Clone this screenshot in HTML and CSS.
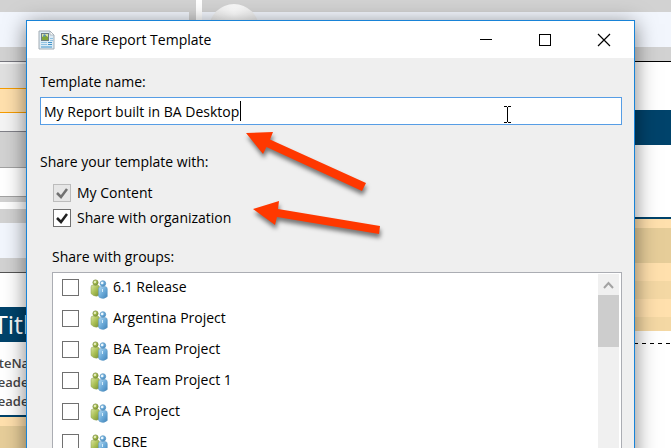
FILE: index.html
```html
<!DOCTYPE html>
<html lang="en">
<head>
    <meta charset="UTF-8">
    <meta name="viewport" content="width=device-width, initial-scale=1.0">
    <title>Share Report Template</title>
    <link rel="stylesheet" href="styles.css">
</head>
<body>
    <!-- Shared icon for the group list -->
    <svg class="defs" width="0" height="0">
        <defs>
            <linearGradient id="green" x1="0" y1="0" x2="1" y2="1">
                <stop offset="0" stop-color="#dbe6a0"/>
                <stop offset=".5" stop-color="#a9bf54"/>
                <stop offset="1" stop-color="#768d34"/>
            </linearGradient>
            <linearGradient id="blue" x1="0" y1="0" x2="1" y2="1">
                <stop offset="0" stop-color="#b4daf2"/>
                <stop offset=".5" stop-color="#6cabd9"/>
                <stop offset="1" stop-color="#3f82b8"/>
            </linearGradient>
            <symbol id="people" viewBox="0 0 18 21">
                <path d="M1 8Q1 6 3 6H7Q9.500 6 9.500 8.500V16Q7 18 3.500 16.500L1 14.500Z" fill="url(#green)" stroke="#8a9c50" stroke-width=".5"/>
                <circle cx="5.500" cy="3.500" r="2.600" fill="url(#green)" stroke="#71852f" stroke-width=".7"/>
                <circle cx="5" cy="3" r="1" fill="#f2f7d4"/>
                <path d="M8.500 10Q8.500 7.500 11 7.500H15Q17.300 7.500 17.300 10V17.500Q14 21 9.500 18.500L8.500 17Z" fill="url(#blue)" stroke="#5c96c2" stroke-width=".5"/>
                <circle cx="12.900" cy="4.500" r="2.800" fill="url(#blue)" stroke="#5290bf" stroke-width=".7"/>
                <circle cx="12.200" cy="4" r="1.300" fill="#eef8fe"/>
                <path d="M12.500 10V13" stroke="#d2ecfb" stroke-width="1"/>
            </symbol>
        </defs>
    </svg>

    <div class="desktop">
        <div class="backdrop">
            <div class="pane pane-left">
                <div class="band ribbon"></div>
                <div class="band gray h14"></div>
                <div class="band silver"></div>
                <div class="band selected"></div>
                <div class="band pale"></div>
                <div class="band gray h35"></div>
                <div class="band field"></div>
                <div class="band gray h5"></div>
                <div class="band white h7"></div>
                <div class="band gray h14"></div>
                <div class="band light h35"></div>
                <div class="band gray h14"></div>
                <div class="band page h35"></div>
                <div class="band heading">Title</div>
                <div class="band names">
                    <span>SiteName</span>
                    <span>Header</span>
                    <span>Header</span>
                </div>
                <div class="band sand h9"></div>
                <div class="band tan rest"></div>
            </div>
            <div class="pane pane-right">
                <span class="orb"></span>
                <div class="band ribbon"></div>
                <div class="band gray h14"></div>
                <div class="band page black h49"></div>
                <div class="band navy h35"></div>
                <div class="band white h72"></div>
                <div class="band navy h2"></div>
                <div class="band sand h9"></div>
                <div class="band tan h35"></div>
                <div class="band sand h18"></div>
                <div class="band wheat h18"></div>
                <div class="band sand h18"></div>
                <div class="band wheat h14"></div>
                <div class="band white h12"></div>
                <div class="band dashed"></div>
                <div class="band white rest"></div>
            </div>
        </div>

        <form class="dialog">
            <header class="titlebar">
                <svg class="app-icon" width="17" height="20" viewBox="0 0 17 20">
                    <path d="M1 1H12L16 5V19H1Z" fill="#dcebf5" stroke="#a3adb5"/>
                    <path d="M12 1V5H16Z" fill="#fff" stroke="#a3adb5" stroke-width=".8"/>
                    <rect x="3.500" y="3.500" width="7" height="7" fill="#d9e3a2" stroke="#6c7d83"/>
                    <path d="M4 7L7 5L10 7V10H4Z" fill="#7fa537"/>
                    <circle cx="6.500" cy="5.500" r="1.200" fill="#5792bd"/>
                    <path d="M3 12.500H9M3 14.500H9M12 8.500H15M12 10.500H15" stroke="#8fc2e3"/>
                    <path d="M10 12.500H14M10 14.500H14M3 17H14" stroke="#3f94cb"/>
                </svg>
                <h1>Share Report Template</h1>
                <div class="window-buttons">
                    <button type="button" aria-label="Minimize">
                        <svg width="14" height="14"><path d="M1 6.500H13" stroke="#000"/></svg>
                    </button>
                    <button type="button" aria-label="Maximize">
                        <svg width="14" height="14"><rect x="1.500" y="1.500" width="11" height="11" fill="none" stroke="#000"/></svg>
                    </button>
                    <button type="button" aria-label="Close">
                        <svg width="14" height="14"><path d="M1 1L13 13M13 1L1 13" stroke="#000" stroke-width="1.200"/></svg>
                    </button>
                </div>
            </header>

            <div class="content">
                <label class="caption" for="template-name">Template name:</label>
                <div class="name-box">
                    <input type="text" id="template-name" value="My Report built in BA Desktop">
                    <span class="caret"></span>
                    <svg class="pointer" width="9" height="17"><path d="M1 .5H4M5 .5H8M4.500 1V16M1 16.500H4M5 16.500H8" fill="none" stroke="#000"/></svg>
                </div>

                <fieldset class="share-with">
                    <legend class="caption">Share your template with:</legend>
                    <label class="option"><input type="checkbox" checked disabled>My Content</label>
                    <label class="option"><input type="checkbox" checked>Share with organization</label>
                </fieldset>

                <div class="groups">
                    <h2 class="caption" id="groups-label">Share with groups:</h2>
                    <div class="list">
                        <ul aria-labelledby="groups-label">
                            <li><label><input type="checkbox"><svg width="18" height="21"><use href="#people"/></svg>6.1 Release</label></li>
                            <li><label><input type="checkbox"><svg width="18" height="21"><use href="#people"/></svg>Argentina Project</label></li>
                            <li><label><input type="checkbox"><svg width="18" height="21"><use href="#people"/></svg>BA Team Project</label></li>
                            <li><label><input type="checkbox"><svg width="18" height="21"><use href="#people"/></svg>BA Team Project 1</label></li>
                            <li><label><input type="checkbox"><svg width="18" height="21"><use href="#people"/></svg>CA Project</label></li>
                            <li><label><input type="checkbox"><svg width="18" height="21"><use href="#people"/></svg>CBRE</label></li>
                        </ul>
                        <div class="scrollbar">
                            <button type="button" aria-label="Scroll up">
                                <svg width="11" height="8"><path d="M1 7L5.500 2L10 7" fill="none" stroke="#a3a3a3" stroke-width="2"/></svg>
                            </button>
                            <div class="thumb"></div>
                        </div>
                    </div>
                </div>
            </div>

            <!-- Callout arrows -->
            <svg class="arrows" width="150" height="120" viewBox="240 125 150 120">
                <path d="M246 133L273 132L270 139.500L366 183L362 191L266.500 147L263 154Z"/>
                <path d="M253 209L279 201L278 209L380 226L379 234L277 217L275 225Z"/>
            </svg>
        </form>
    </div>
</body>
</html>
```

FILE: styles.css
```css
* {
    box-sizing: border-box;
}
body {
    margin: 0;
    font-family: "Open Sans", "Noto Sans", sans-serif;
    font-size: 14px;
    line-height: 20px;
    color: #000;
}
.defs {
    position: absolute;
}
.desktop {
    position: relative;
    height: 100vh;
    overflow: hidden;
}

/* Report editor behind the dialog */
.backdrop {
    display: flex;
    gap: 6px;
    height: 100%;
    background: #fff;
}
.pane {
    display: flex;
    flex-direction: column;
    position: relative;
    padding-top: 12px;
    background: #d2d2d2;
    overflow: hidden;
}
.pane-left {
    width: 196px;
}
.pane-right {
    flex: 1;
}
.band {
    flex-shrink: 0;
}
.ribbon {
    height: 35px;
    background: #f2f6fd;
}
.pane-left .ribbon {
    margin-right: 7px;
}
.gray { background: #d2d2d2; }
.light { background: #f2f6fd; }
.white { background: #fff; }
.navy { background: #00436b; }
.sand { background: #ffe0ad; }
.tan { background: #e6cd99; }
.wheat { background: #f4d8a4; }
.h2 { height: 2px; }
.h5 { height: 5px; }
.h7 { height: 7px; }
.h9 { height: 9px; }
.h12 { height: 12px; }
.h14 { height: 14px; }
.h18 { height: 18px; }
.h35 { height: 35px; }
.h49 { height: 49px; }
.h72 { height: 72px; }
.rest { flex: 1; }
.silver {
    height: 27px;
    border-top: 1px solid #77777f;
    background: #e0e0e0;
    box-shadow: inset 0 2px #f6f6f6;
}
.selected {
    height: 25px;
    border: solid #f59c00;
    border-width: 1px 0;
    background: #ffe0ad;
}
.pale {
    height: 19px;
    border-bottom: 1px solid #808088;
    background: #f4f4f4;
}
.field {
    height: 30px;
    border: solid #a2a2a2;
    border-width: 1px 0;
    background: #fff;
}
.page {
    border-top: 1px solid #555;
    background: #fff;
}
.page.black {
    border-color: #000;
}
.heading {
    height: 35px;
    background: #00436b;
    color: #fff;
    font-size: 25px;
    line-height: 35px;
    text-indent: -6px;
}
.names {
    display: flex;
    flex-direction: column;
    height: 75px;
    padding-top: 12px;
    border-bottom: 2px solid #00436b;
    background: #fff;
    color: #444;
    font-size: 13px;
    font-weight: 600;
    line-height: 19px;
    text-indent: -12px;
}
.dashed {
    height: 1px;
    background: repeating-linear-gradient(to right, #000 0 4px, #fff 4px 8px);
}
.orb {
    position: absolute;
    top: 4px;
    left: 7px;
    width: 50px;
    height: 50px;
    border-radius: 50%;
    background: radial-gradient(circle at 50% 20%, #fff, #eee 45%, #ccc);
}

/* Dialog window */
.dialog {
    position: absolute;
    top: 20px;
    right: 36px;
    left: 26px;
    border: 1px solid #1883d7;
    background: #efefef;
    box-shadow: 0 4px 20px rgba(0, 0, 0, 0.5);
}
.titlebar {
    display: flex;
    align-items: center;
    height: 37px;
    padding: 0 1px 0 11px;
    background: #fff;
}
.titlebar h1 {
    flex: 1;
    margin: 0 0 0 6px;
    font-size: 14px;
    font-weight: 400;
}
.window-buttons {
    display: flex;
}
button {
    display: flex;
    align-items: center;
    justify-content: center;
    padding: 0;
    border: 0;
    background: none;
}
.window-buttons button {
    width: 59px;
    height: 36px;
}
.content {
    padding: 14px 12px 12px 13px;
}
.caption {
    display: block;
    margin: 0;
    padding: 0;
    font-size: 14px;
    font-weight: 400;
}
.name-box {
    position: relative;
    margin-top: 5px;
}
.name-box input {
    display: block;
    width: 100%;
    height: 28px;
    padding: 0 3px;
    border: 1px solid #569de5;
    background: #fff;
    font: inherit;
    outline: none;
}
.caret {
    position: absolute;
    top: 4px;
    left: 200px;
    width: 1px;
    height: 20px;
    background: #000;
}
.pointer {
    position: absolute;
    top: 9px;
    right: 110px;
}
.share-with {
    margin: 27px 0 0;
    padding: 0;
    border: 0;
}
.option {
    display: flex;
    align-items: center;
    gap: 6px;
    height: 25px;
    margin-left: 13px;
}
legend + .option {
    margin-top: 8px;
}
input[type="checkbox"] {
    appearance: none;
    flex-shrink: 0;
    width: 17px;
    height: 17px;
    margin: 0;
    border: 1px solid #707070;
    background: #fff;
}
.option input[type="checkbox"] {
    width: 18px;
    height: 18px;
}
input[type="checkbox"]:checked {
    background: #fff url("data:image/svg+xml,%3Csvg xmlns='http://www.w3.org/2000/svg' viewBox='0 0 16 16'%3E%3Cpath d='M3 8L7 12L13 4' fill='none' stroke='%23212121' stroke-width='2.500'/%3E%3C/svg%3E");
}
input[type="checkbox"]:disabled {
    border-color: #bcbcbc;
    background: #e6e6e6 url("data:image/svg+xml,%3Csvg xmlns='http://www.w3.org/2000/svg' viewBox='0 0 16 16'%3E%3Cpath d='M3 8L7 12L13 4' fill='none' stroke='%23707070' stroke-width='2.500'/%3E%3C/svg%3E");
}
.groups {
    margin: 17px 0 0 12px;
}
.list {
    display: flex;
    height: 220px;
    margin-top: 5px;
    padding: 1px 2px 1px 0;
    border: 1px solid #abadb3;
    background: #fff;
}
.list ul {
    flex: 1;
    margin: 0;
    padding: 0 0 0 9px;
    list-style: none;
}
.list li {
    height: 31px;
}
.list label {
    display: flex;
    align-items: center;
    height: 26px;
}
.list label svg {
    margin: 4px 5px 0 11px;
}
.scrollbar {
    width: 21px;
    background: #f0f0f0;
}
.scrollbar button {
    width: 21px;
    height: 21px;
}
.thumb {
    height: 52px;
    background: #cdcdcd;
}
.arrows {
    position: absolute;
    top: 104px;
    left: 213px;
    fill: #ff3800;
    filter: drop-shadow(1px 4px 2px rgba(0, 0, 0, 0.5));
    pointer-events: none;
}
```
